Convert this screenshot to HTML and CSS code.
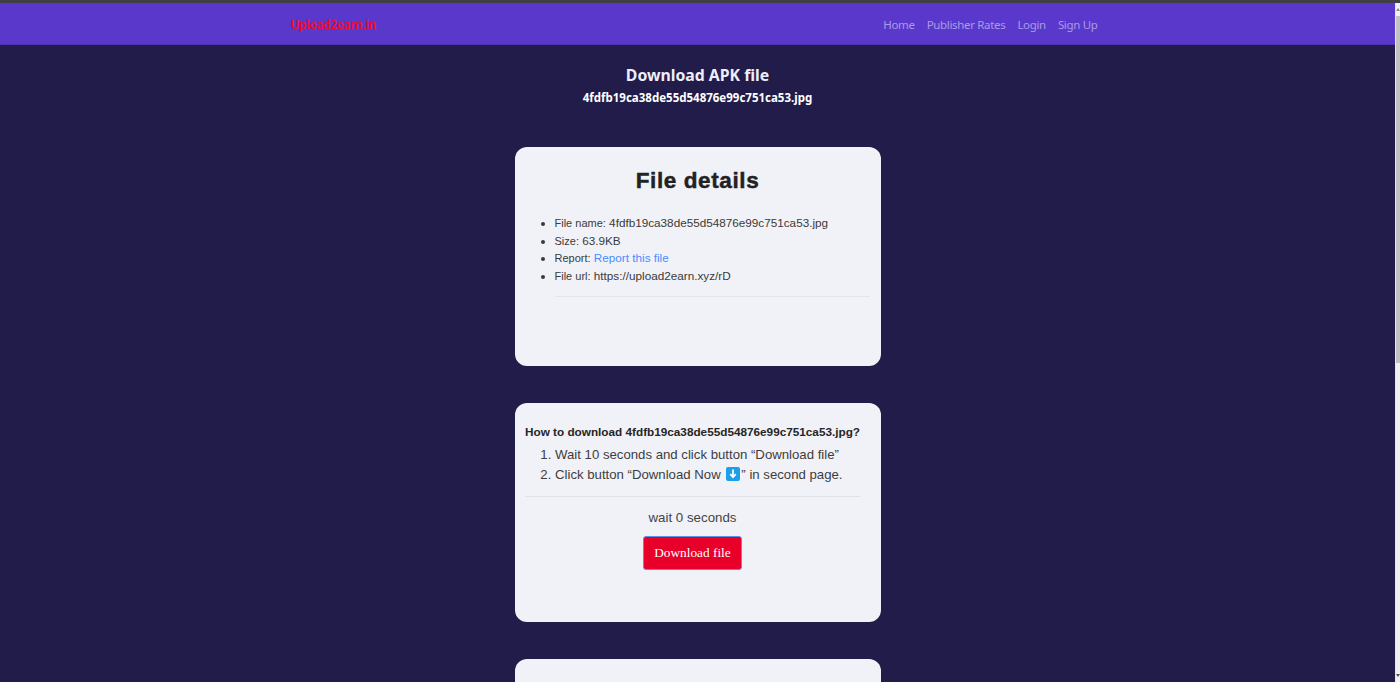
FILE: index.html
```html
<!DOCTYPE html>
<html lang="en">
<head>
<meta charset="utf-8">
<title>Download APK file</title>
<link rel="stylesheet" href="styles.css">
</head>
<body>
<div class="topstrip"></div>
<div class="window">
  <div class="page">
    <nav class="navbar">
      <div class="nav-inner">
        <a class="brand" href="#">Upload2earn.in</a>
        <div class="nav-links">
          <a href="#">Home</a>
          <a href="#">Publisher Rates</a>
          <a href="#">Login</a>
          <a href="#">Sign Up</a>
        </div>
      </div>
    </nav>
    <header class="heading">
      <h1>Download APK file</h1>
      <h2>4fdfb19ca38de55d54876e99c751ca53.jpg</h2>
    </header>
    <main class="cards">
      <section class="card details">
        <h3>File details</h3>
        <ul>
          <li><span class="label">File name:</span> 4fdfb19ca38de55d54876e99c751ca53.jpg</li>
          <li><span class="label">Size:</span> 63.9KB</li>
          <li><span class="label">Report:</span> <a href="#">Report this file</a></li>
          <li><span class="label">File url:</span> https://upload2earn.xyz/rD</li>
        </ul>
        <hr class="rule-list">
      </section>
      <section class="card howto">
        <p class="howto-title">How to download 4fdfb19ca38de55d54876e99c751ca53.jpg?</p>
        <ol>
          <li>Wait 10 seconds and click button “Download file”</li>
          <li>Click button “Download Now <svg class="arrow" viewBox="0 0 14 14" aria-hidden="true"><rect width="14" height="14" rx="2" fill="#1b9fe8"/><path d="M7 2.6v7.2M4.2 7.2 7 10.2l2.8-3" fill="none" stroke="#fff" stroke-width="1.7"/></svg>” in second page.</li>
        </ol>
        <hr class="rule-how">
        <div class="action">
          <p class="wait">wait 0 seconds</p>
          <button class="dl" type="button">Download file</button>
        </div>
      </section>
      <section class="card last"></section>
    </main>
  </div>
  <div class="scrollbar">
    <div class="sb-arrow sb-up"></div>
    <div class="thumb"></div>
    <div class="sb-spacer"></div>
    <div class="sb-arrow sb-down"></div>
  </div>
</div>
</body>
</html>
```
FILE: styles.css
```css
* { box-sizing: border-box; }
html, body { margin: 0; height: 100%; overflow: hidden; }
body { background: #211c4a; display: flex; flex-direction: column; font-family: "Liberation Sans", Arial, sans-serif; }
.topstrip { height: 3px; background: #3f3f46; flex: none; }
.window { flex: 1; display: flex; min-height: 0; }
.page { flex: 1; min-width: 0; overflow: hidden; }

.scrollbar { width: 5px; background: #f1f1f1; border-left: 1px solid #e6e6ee; flex: none; display: flex; flex-direction: column; }
.sb-arrow { height: 13px; flex: none; display: flex; align-items: center; justify-content: center; }
.sb-up::before { content: ""; border: 2px solid transparent; border-top: 0; border-bottom: 3px solid #8a8a8a; }
.sb-down::before { content: ""; border: 2px solid transparent; border-bottom: 0; border-top: 3px solid #505050; }
.thumb { height: 347px; background: #c1c1c1; flex: none; }
.sb-spacer { flex: 1; }

.navbar { height: 42px; background: #5a38cc; border-bottom: 1px solid #4f30b4; }
.nav-inner { width: 814px; margin: 0 auto; height: 100%; padding: 1px 7px 0 0; display: flex; justify-content: space-between; align-items: center; }
.brand { color: #f00a2c; font: 700 11.8px "Noto Sans", sans-serif; letter-spacing: -0.33px; text-decoration: none; }
.nav-links { display: flex; gap: 12px; }
.nav-links a { color: #a99be6; font: 400 11.5px "Noto Sans", sans-serif; letter-spacing: -0.33px; text-decoration: none; }

.heading { text-align: center; padding-top: 19px; color: #eeeef8; }
.heading h1 { margin: 0; font: 700 15.8px/22px "Noto Sans", sans-serif; }
.heading h2 { margin: 2px 0 0; font: 700 11.5px/19px "Noto Sans", sans-serif; color: #fff; }

.cards { width: 366px; margin: 40px auto 0; display: flex; flex-direction: column; gap: 37px; }
.card { background: #f1f2f7; border-radius: 12px; color: #333; height: 219px; flex: none; }

.details { padding: 21px 11px 0 40px; }
.details h3 { margin: 0 0 21px -40px; padding-left: 11px; text-align: center; font: 700 22.5px/25px "Liberation Sans", sans-serif; color: #222; letter-spacing: 0.6px; -webkit-text-stroke: 0.45px #222; }
.details ul { margin: 0; padding: 0; font-size: 11.73px; line-height: 17.6px; color: #3a3a3a; }
.details li { margin: 0; height: 17.6px; }
.details .label { font-size: 11px; line-height: 1; }
.details a { color: #4b8dff; text-decoration: none; }
.rule-list { margin: 12px 0 0; border: 0; border-top: 1px solid #e6e6ea; }

.howto { padding: 20px 20.5px 0 10.5px; }
.howto-title { margin: 0 0 5px; font: 700 11.75px/17px "Liberation Sans", sans-serif; color: #262626; white-space: nowrap; }
.howto ol { margin: 0; padding-left: 30px; font-size: 13.2px; line-height: 20px; color: #3d3d3d; }
.howto li { height: 20px; }
.arrow { width: 14px; height: 14px; vertical-align: -2px; margin: 0 1px 0 2px; }
.rule-how { margin: 11px 0 0; border: 0; border-top: 1px solid #e2e2e6; }
.action { display: flex; flex-direction: column; align-items: center; }
.wait { margin: 12px 0 1px; font-size: 13.3px; line-height: 17px; color: #444; }
.dl { margin-top: 9px; width: 99px; height: 34px; padding: 0; background: #e8002a; border: 1px solid #5e8fe6; border-radius: 3px; color: #fff; font: 13.3px "Liberation Serif", serif; }
```
